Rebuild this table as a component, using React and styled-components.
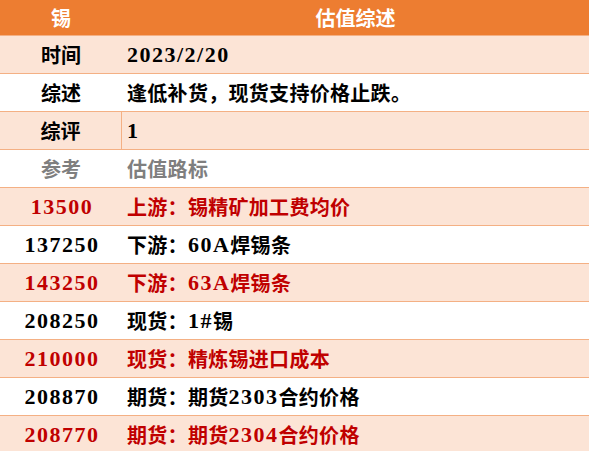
import React from 'react';
import styled, { createGlobalStyle } from 'styled-components';

const GlobalStyle = createGlobalStyle`
  html, body {
    margin: 0;
    padding: 0;
    background: #fff;
  }
  body {
    font-family: "Liberation Serif", "Noto Sans CJK SC", serif;
  }
`;

const Table = styled.div`
  width: 589px;
  display: flex;
  flex-direction: column;
`;

const Header = styled.div`
  display: grid;
  grid-template-columns: 122px 1fr;
  height: 35px;
  background-color: #ed7d31;
  color: #fff;
  font-weight: bold;
  font-size: 20px;
`;

const HeadCell = styled.div`
  display: flex;
  align-items: center;
  justify-content: center;
`;

const Row = styled.div`
  display: grid;
  grid-template-columns: 122px 1fr;
  box-sizing: border-box;
  height: 38px;
  border-top: 1px solid #f4b084;
  background-color: ${p => (p.$shade ? '#fce4d6' : '#fff')};
  color: ${p => p.$tone === 'red' ? '#c00000' : p.$tone === 'gray' ? '#7f7f7f' : '#000'};
  font-weight: bold;
  font-size: 20px;
`;

const KeyCell = styled.div`
  display: flex;
  align-items: center;
  justify-content: center;
  box-sizing: border-box;
  border-right: ${p => (p.$divided ? '1px solid #f4b084' : 'none')};
  font-size: ${p => (p.$num ? '22px' : '20px')};
  letter-spacing: ${p => (p.$num ? '1.5px' : '0')};
  padding-left: ${p => (p.$num ? '2px' : '0')};
`;

const ValueCell = styled.div`
  display: flex;
  align-items: center;
  padding-left: 5px;
  white-space: nowrap;
  letter-spacing: 0.3px;
`;

const Num = styled.span`
  font-size: 22px;
  letter-spacing: 1.5px;
`;

const rows = [
  { key: '时间', value: <Num>2023/2/20</Num>, shade: true },
  { key: '综述', value: '逢低补货，现货支持价格止跌。' },
  { key: '综评', value: <Num>1</Num>, shade: true, divided: true },
  { key: '参考', value: '估值路标', tone: 'gray' },
  { key: '13500', num: true, value: '上游：锡精矿加工费均价', shade: true, tone: 'red' },
  { key: '137250', num: true, value: <>下游：<Num>60A</Num>焊锡条</> },
  { key: '143250', num: true, value: <>下游：<Num>63A</Num>焊锡条</>, shade: true, tone: 'red' },
  { key: '208250', num: true, value: <>现货：<Num>1#</Num>锡</> },
  { key: '210000', num: true, value: '现货：精炼锡进口成本', shade: true, tone: 'red' },
  { key: '208870', num: true, value: <>期货：期货<Num>2303</Num>合约价格</> },
  { key: '208770', num: true, value: <>期货：期货<Num>2304</Num>合约价格</>, shade: true, tone: 'red' },
];

export default function App() {
  return (
    <>
      <GlobalStyle />
      <Table>
        <Header>
          <HeadCell>锡</HeadCell>
          <HeadCell>估值综述</HeadCell>
        </Header>
        {rows.map((r, i) => (
          <Row key={i} $shade={r.shade} $tone={r.tone}>
            <KeyCell $num={r.num} $divided={r.divided}>{r.key}</KeyCell>
            <ValueCell>{r.value}</ValueCell>
          </Row>
        ))}
      </Table>
    </>
  );
}
